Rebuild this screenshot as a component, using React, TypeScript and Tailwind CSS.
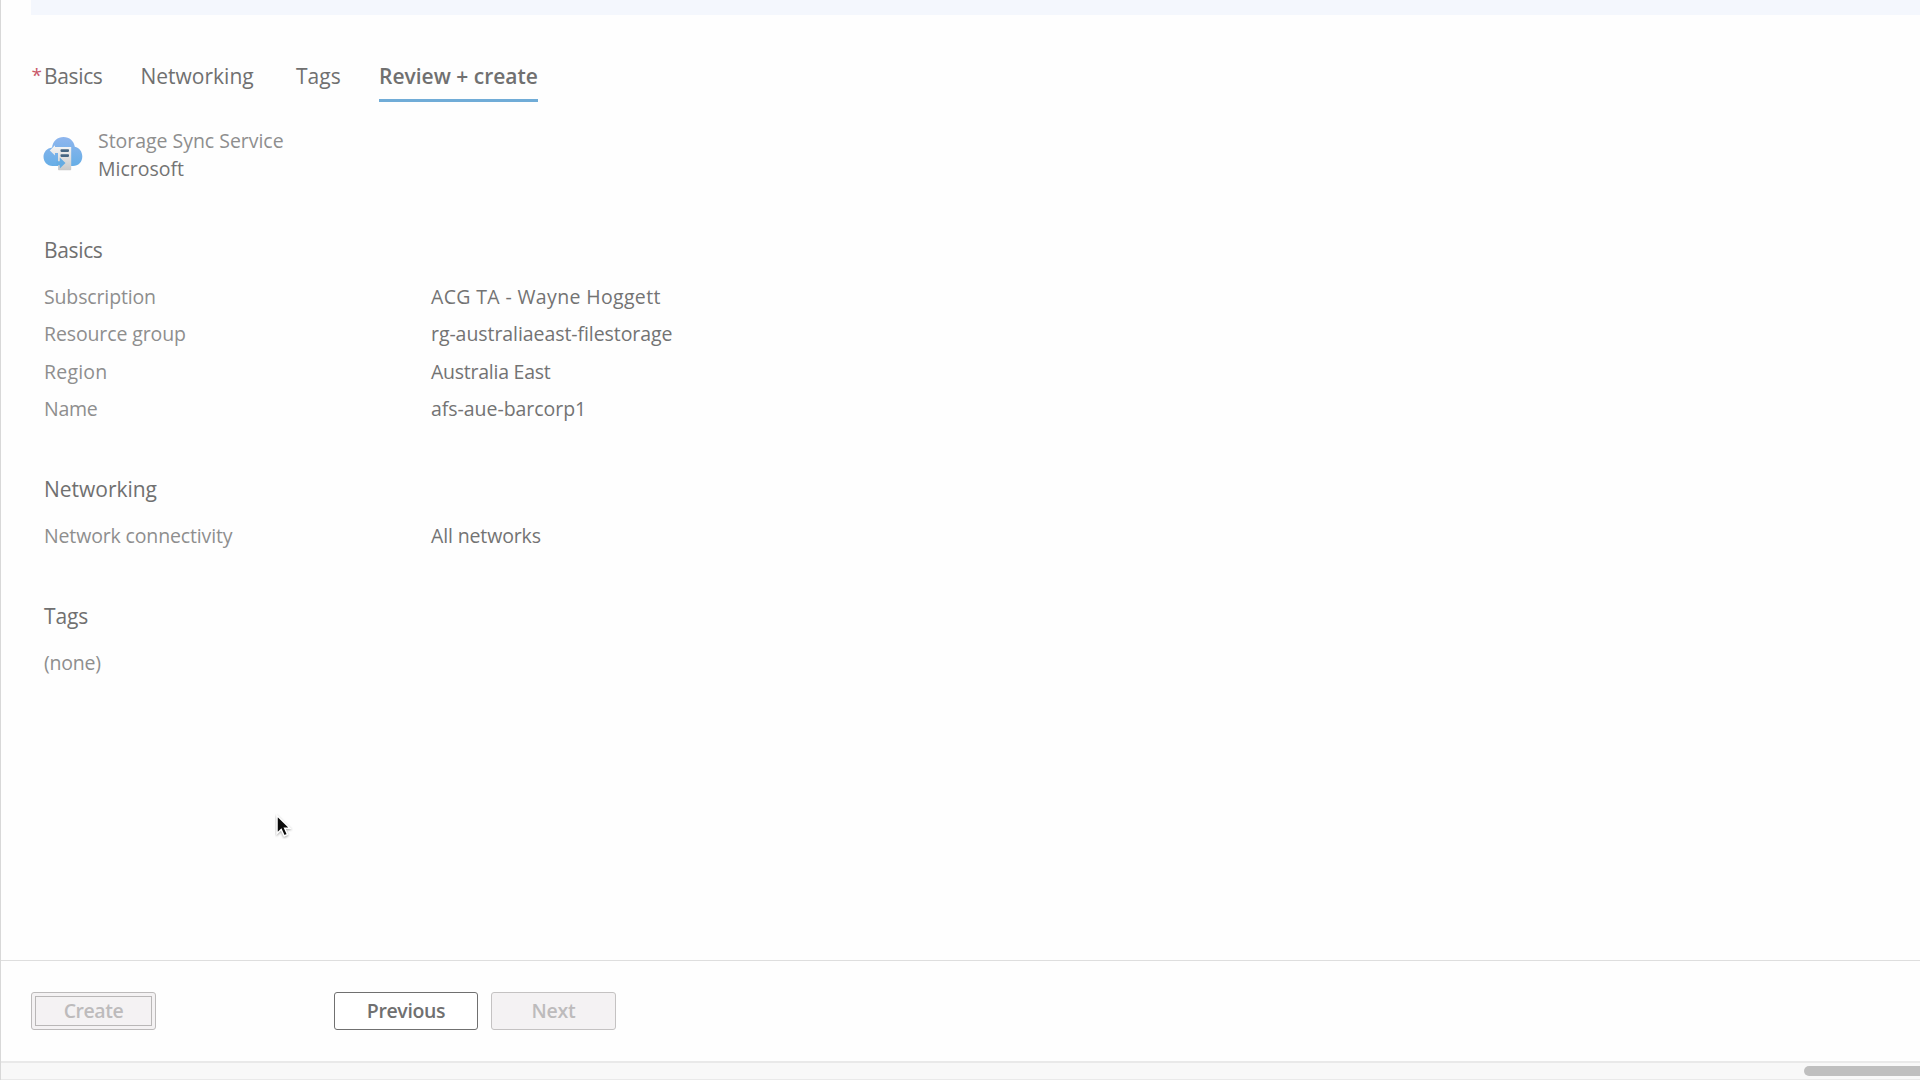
type Row = { label: string; labelClass: string; value?: string; valueClass?: string };

const basics: Row[] = [
  { label: "Subscription", labelClass: "tracking-[-0.14px]", value: "ACG TA - Wayne Hoggett", valueClass: "tracking-[0.35px]" },
  { label: "Resource group", labelClass: "tracking-[-0.12px]", value: "rg-australiaeast-filestorage", valueClass: "tracking-[-0.07px]" },
  { label: "Region", labelClass: "tracking-[0.2px]", value: "Australia East", valueClass: "tracking-[-0.25px]" },
  { label: "Name", labelClass: "tracking-[-0.3px]", value: "afs-aue-barcorp1", valueClass: "tracking-[-0.04px]" },
];

const networking: Row[] = [
  { label: "Network connectivity", labelClass: "tracking-[-0.14px]", value: "All networks", valueClass: "tracking-[-0.13px]" },
];

const tags: Row[] = [{ label: "(none)", labelClass: "tracking-[-0.2px]" }];

function Section({ title, titleClass, rows, className }: { title: string; titleClass: string; rows: Row[]; className: string }) {
  return (
    <section className={className}>
      <h2 className={`mb-3.5 text-[21px] leading-7 text-[#707070] ${titleClass}`}>{title}</h2>
      <dl>
        {rows.map((row) => (
          <div key={row.label} className="grid h-[37.5px] grid-cols-[387px_1fr] leading-[37.5px]">
            <dt className={`text-[#8e8e8e] ${row.labelClass}`}>{row.label}</dt>
            <dd className={`text-[#737373] ${row.valueClass ?? ""}`}>{row.value}</dd>
          </div>
        ))}
      </dl>
    </section>
  );
}

function SyncServiceIcon() {
  return (
    <svg width="40" height="36" viewBox="0 0 40 36" className="shrink-0">
      <defs>
        <linearGradient id="cloud" x1="0" y1="0" x2="0" y2="1">
          <stop offset="0" stopColor="#8fb6ee" />
          <stop offset="1" stopColor="#67aee6" />
        </linearGradient>
        <linearGradient id="server" x1="0" y1="0" x2="0" y2="1">
          <stop offset="0" stopColor="#f7f7f7" />
          <stop offset="1" stopColor="#c9c9c9" />
        </linearGradient>
      </defs>
      <path d="M9.5 30C4 30 .5 25.800.5 20.800.5 16 4 12.200 9 11.500 10 5 14.500 1 20.500 1c6 0 10.500 4 11.300 9.700C36.500 11.500 39.300 15.800 39.300 20.500 39.300 26 35.500 30 30 30z" fill="url(#cloud)" />
      <path d="M14 11h14.200v22.500q0 .8-.8.8H15.800q-.8 0-.8-.8V17H12v2.600L6.800 14.400 12 9.300V11z" fill="url(#server)" />
      <rect x="17.500" y="13.300" width="8.500" height="2.600" rx=".8" fill="#476783" />
      <rect x="17.500" y="18.300" width="8.500" height="2.600" rx=".8" fill="#476783" />
      <path d="M13.500 25.200h3.300v-3.700l5.700 5.500-5.700 5.500v-3.300h-3.300z" fill="#65ace3" />
    </svg>
  );
}

function Cursor() {
  return (
    <svg width="18" height="26" viewBox="0 0 18 26" className="absolute left-[273.500px] top-[813px]">
      <path d="M2 2.500v18l4.200-4 3 6.500 3.300-1.500-2.800-6.200h5.300z" fill="#0b0b0b" stroke="#fff" strokeWidth="1.500" className="drop-shadow-[0_1px_1px_rgba(0,0,0,0.35)]" />
    </svg>
  );
}

export default function App() {
  return (
    <div className="relative flex h-[1080px] w-[1920px] flex-col overflow-hidden border-l border-[#d8d8d8] bg-[#fefefe] font-['Open_Sans',sans-serif] text-[19.500px]">
      <div className="ml-[30px] h-[14.500px] shrink-0 bg-[#f4f7fd]" />

      <main className="flex-1">
        <nav className="mt-[47.500px] flex h-[40px] items-start text-[21px] leading-7 text-[#707070]">
          <div className="ml-[30.500px] flex w-[109px]">
            <span className="w-[12.500px] text-[19px] leading-[26px] text-[#c9596a]">*</span>
            <span className="tracking-[-0.35px]">Basics</span>
          </div>
          <span className="w-[155.500px] tracking-normal">Networking</span>
          <span className="w-[83px] tracking-normal">Tags</span>
          <span className="h-[40px] w-[158.500px] whitespace-nowrap border-b-3 border-[#70acd7] font-semibold">Review + create</span>
        </nav>

        <div className="ml-[42px] mt-[24.500px] flex leading-[28.500px]">
          <div className="mt-[9px] w-[55px]"><SyncServiceIcon /></div>
          <div>
            <p className="tracking-[-0.03px] text-[#8e8e8e]">Storage Sync Service</p>
            <p className="text-[#737373]">Microsoft</p>
          </div>
        </div>

        <div className="ml-[43px]">
          <Section className="mt-[52px]" title="Basics" titleClass="tracking-[-0.35px]" rows={basics} />
          <Section className="mt-[47px]" title="Networking" titleClass="tracking-[-0.02px]" rows={networking} />
          <Section className="mt-[48px]" title="Tags" titleClass="tracking-[-0.1px]" rows={tags} />
        </div>
      </main>

      <footer className="flex h-[101px] shrink-0 items-start border-t border-[#dedede] pl-[30px] pt-[31px] font-semibold">
        <button className="h-[38px] w-[125px] rounded-[3px] border border-[#bcbaba] bg-[#f4f2f3] p-[3px] text-[#bdbbbc]">
          <span className="flex h-full items-center justify-center border border-[#b9b7b7] tracking-[-0.45px]">Create</span>
        </button>
        <button className="ml-[178px] h-[38px] w-[144px] rounded-[3px] border border-[#707070] bg-white tracking-[-0.37px] text-[#707070]">Previous</button>
        <button className="ml-[13px] h-[38px] w-[125px] rounded-[3px] border border-[#c4c2c2] bg-[#f4f2f3] tracking-[-0.3px] text-[#bdbbbc]">Next</button>
      </footer>

      <div className="flex h-[19px] shrink-0 justify-end border-y border-t-2 border-[#e9e9e9] bg-[#f8f8f8] pt-[3px]">
        <div className="h-[10px] w-[116px] rounded-l-full bg-[#bfbfbf]" />
      </div>

      <Cursor />
    </div>
  );
}
